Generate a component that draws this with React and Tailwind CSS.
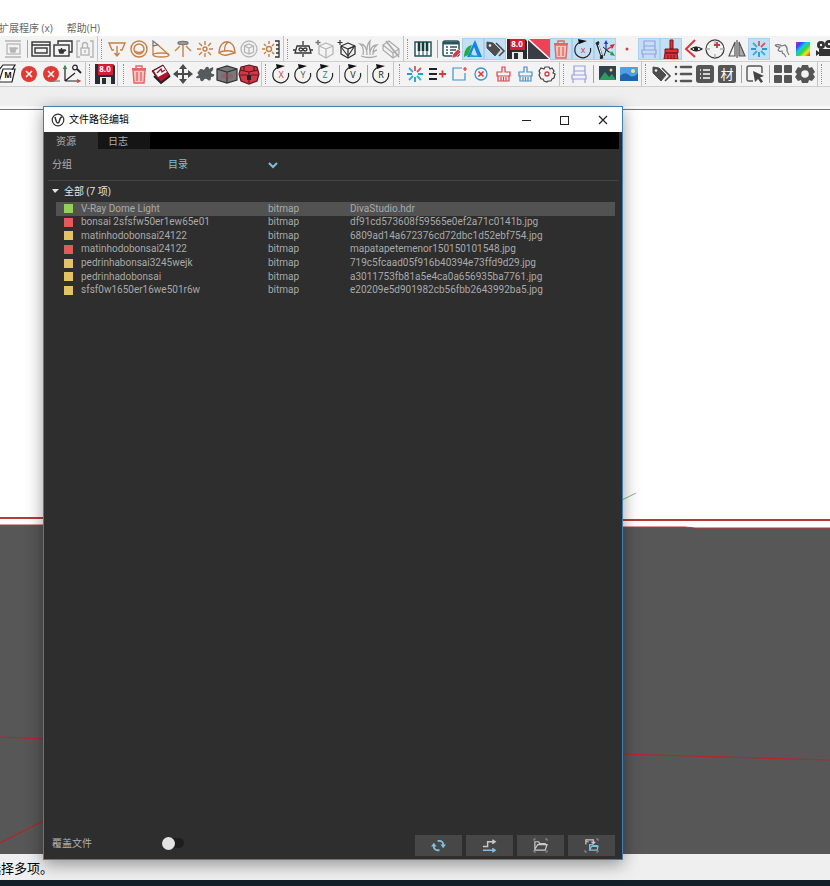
import React from "react";

const O = "#c58145";
const D = "#333333";
const G = "#b5b5b5";
const R = "#d9363c";
const B = "#3b93cf";

const cube = (c) => (
  <g stroke={c} fill="none" strokeWidth="1.3" strokeLinejoin="round">
    <path d="M12 5l7 3v8l-7 4-7-4V8z" />
    <path d="M5 8l7 3 7-3M12 11v9" />
  </g>
);

const floppy = (
  <>
    <path d="M1 1h18l2 2v18H1z" fill="#2a2c33" />
    <rect x="4" y="1" width="15" height="11" fill="#d31f35" />
    <rect x="6" y="14" width="11" height="7" fill="#e8e8e8" />
    <rect x="8" y="15" width="4" height="6" fill="#2a2c33" />
    <text x="11" y="9" textAnchor="middle" fontSize="8" fontWeight="700" fill="#fff">8.0</text>
  </>
);

const trash = (
  <g stroke="#e26664" strokeWidth="1.4" fill="#f8c4c0">
    <path d="M5 7l1 13h10l1-13z" />
    <path d="M4 6h14" strokeWidth="2" />
    <path d="M8 5V3h6v2" fill="none" />
    <path d="M9 9v9M13 9v9" />
  </g>
);

const tags = (
  <g fill="#4d4d4d">
    <path d="M3 4l6 1 7 7-5 6-8-8z" stroke="#4d4d4d" strokeLinejoin="round" />
    <circle cx="6" cy="7.500" r="1.300" fill="#f3f3f3" />
    <path d="M12 5l8 8-5 5" fill="none" stroke="#4d4d4d" strokeWidth="1.600" />
  </g>
);

const rotate = (letter, color) => (
  <>
    <path d="M18.500 10A8 8 0 1 1 9 4" fill="none" stroke="#222" strokeWidth="1.200" />
    <path d="M6 1l9 2-8 3z" fill="#111" />
    <text x="11" y="15" textAnchor="middle" fontSize="9" fill={color}>{letter}</text>
  </>
);

const chair = (
  <g fill="none" stroke="#9b9ee6" strokeWidth="1.200">
    <path d="M6 12V3h11v9M6 8h11M4 12h14v4H4zM5 16v4M17 16v4" />
  </g>
);

const spark = (
  <g strokeWidth="1.800" fill="none">
    <path d="M11 14v5M3 11h5M14 11h5" stroke="#1f9bd6" />
    <path d="M5 5l4 4M17 17l-4-4M5 17l4-4" stroke="#3aaedb" />
    <path d="M17 5l-4 4M11 3v5" stroke="#d55563" />
  </g>
);

const cross = (
  <>
    <circle cx="11" cy="11" r="8" fill="#e03b32" />
    <path d="M8 8l6 6M14 8l-6 6" stroke="#fff" strokeWidth="1.500" />
  </>
);

const broom = (c) => (
  <g fill="none" stroke={c} strokeWidth="1.200">
    <path d="M10 9V4h3v5h5v4H5V9zM6 13v5h11v-5M9 14v4M11.500 14v4M14 14v4" />
  </g>
);

const ICONS = {
  renderFrame: (
    <g fill="none" stroke={G} strokeWidth="1.300">
      <path d="M3 3h16M3 19h16" />
      <rect x="5" y="6" width="13" height="10" />
      <path d="M8 10h6l-1 4H9zM14 11l2-1" fill={G} />
    </g>
  ),
  frameBuffer: (
    <g fill="none" stroke={D} strokeWidth="1.400">
      <rect x="2" y="4" width="18" height="14" />
      <path d="M2 7h18" strokeWidth="1.500" />
      <rect x="5" y="10" width="12" height="5" />
    </g>
  ),
  batchFrame: (
    <g fill="none" stroke={D} strokeWidth="1.400">
      <path d="M6 6V3h14v11h-3" />
      <rect x="2" y="7" width="15" height="11" />
      <path d="M7 12h5l-1 3H8zM12 13l2-1M9.500 10v2" fill={D} />
    </g>
  ),
  lockFrame: (
    <g fill="none" stroke={G} strokeWidth="1.400">
      <path d="M6 3H3v16h3M16 3h3v16h-3" />
      <rect x="7" y="10" width="8" height="7" />
      <path d="M8.500 10V7a2.500 2.500 0 0 1 5 0v3M11 12v3" />
    </g>
  ),
  rectLight: (
    <g fill="none" stroke={O} strokeWidth="1.400">
      <path d="M8 12H6L3 5h16l-3 7h-2M11 8v10M8.500 15l2.500 3 2.500-3" />
    </g>
  ),
  sphereLight: (
    <g fill="none" stroke={O} strokeWidth="1.400">
      <circle cx="11" cy="11" r="8" />
      <circle cx="11" cy="11" r="5" />
      <path d="M7 13q4 3 8 0" />
    </g>
  ),
  spotLight: (
    <g fill="none" stroke={O} strokeWidth="1.300">
      <path d="M3 3v5l5-1z" stroke="#777" />
      <path d="M3 8v9M8 7l11 10" />
      <ellipse cx="11" cy="17" rx="8" ry="2" />
    </g>
  ),
  iesLight: (
    <g fill="none" stroke={O} strokeWidth="1.400">
      <ellipse cx="11" cy="5" rx="5" ry="1.500" stroke="#777" fill="#aaa" />
      <path d="M11 7v12M8 8l-5 5M14 8l5 5" />
    </g>
  ),
  omniLight: (
    <g fill="none" stroke={O} strokeWidth="1.400">
      <circle cx="11" cy="11" r="2" />
      <path d="M11 3v4M11 15v4M3 11h4M15 11h4M5 5l3 3M14 14l3 3M5 17l3-3M14 8l3-3" />
    </g>
  ),
  domeLight: (
    <g fill="none" stroke={O} strokeWidth="1.300">
      <path d="M3 15C3 0 19 0 19 15M12 4c-3 3-4 6-3 9" />
      <path d="M3 15q4 3 8 2t8-2q-4-3-10-2-4 0-6 2z" />
    </g>
  ),
  meshLight: (
    <g fill="none" stroke={G} strokeWidth="1.300">
      <circle cx="11" cy="11" r="8" />
      <path d="M11 6l4.500 2v6L11 16l-4.500-2V8zM6.500 8l4.500 2 4.500-2M11 10v6" />
    </g>
  ),
  sunLight: (
    <>
      <g fill="none" stroke={O} strokeWidth="1.400">
        <circle cx="9" cy="11" r="2.500" />
        <path d="M9 3v3M9 16v3M2 11h3M4 6l2 2M4 16l2-2M12 8l2-2M12 14l2 2" />
      </g>
      <path d="M15 3h4v16h-4M16 7h3M16 11h3M16 15h3" fill="none" stroke={D} strokeWidth="1.300" />
    </>
  ),
  infinitePlane: (
    <g fill="none" stroke={D} strokeWidth="1.300">
      <path d="M5 8h12l2 7H3zM11 3v4M11 16v3M1 12h3M18 12h3" />
      <path d="M11 11.500c-1-2-4-2-4 0s3 2 4 0 4-2 4 0-3 2-4 0" />
    </g>
  ),
  exportProxy: (
    <>
      {cube(G)}
      <path d="M4 2v5M1.500 4.500h5" stroke="#777" strokeWidth="1.500" />
    </>
  ),
  importProxy: (
    <>
      {cube(D)}
      <path d="M4 2v5M1.500 4.500h5M12 11l7-3M5 9l7 9M12 18l6-9" stroke={D} strokeWidth="1.200" fill="none" />
    </>
  ),
  fur: (
    <g fill="none" stroke="#aaaaaa" strokeWidth="1.300">
      <path d="M5 17C6 11 5 8 2 6c5 0 7 4 7 11M9 12c0-4 1-7 3-9-1 4 0 9 0 14M12 14c1-5 3-7 7-7-4 3-4 6-4 10M15 15q2-3 4-3M3 18q8 3 16 0" />
    </g>
  ),
  clipper: (
    <g fill="none" stroke="#aaaaaa" strokeWidth="1.200">
      <path d="M3 7l6-4 10 8v5l-6 4L3 12zM3 7l10 8 6-4M13 15v5" />
      <path d="M6 3l13 16" strokeWidth="1.800" />
    </g>
  ),
  piano: (
    <>
      <rect x="3" y="4" width="16" height="14" fill="#fff" stroke="#174a4c" strokeWidth="1.400" />
      <path d="M7 4v14M11 4v14M15 4v14" stroke="#174a4c" />
      <path d="M7 4v9M11 4v9M15 4v9" stroke="#123c40" strokeWidth="2.600" />
    </>
  ),
  listEdit: (
    <>
      <rect x="3" y="3" width="16" height="15" rx="2" fill="#fff" stroke="#29545c" strokeWidth="1.500" />
      <path d="M3 5h16" stroke="#29545c" strokeWidth="3" />
      <path d="M6 9h2M10 9h7M6 12h2M10 12h6M6 15h2M10 15h3" stroke="#29545c" strokeWidth="1.500" />
      <path d="M12 20l1-4 5-5 3 3-5 5z" fill="#d53b50" stroke="#f3f3f3" strokeWidth="0.600" />
    </>
  ),
  aLogo: (
    <>
      <path d="M2 19C2 12 5 8 10 7L6 17z" fill="#1fae3c" />
      <path d="M13 2l7 17h-4L12 9 8 19H5z" fill="#1284e8" />
      <path d="M9 16q4 3 8 0v3H8z" fill="#1a9fd8" />
    </>
  ),
  tags,
  floppy,
  diagonal: (
    <>
      <rect x="0" y="1" width="22" height="20" fill="#3a3d44" />
      <path d="M0 1h22v20z" fill="#ed4356" />
      <path d="M0 1l22 20" stroke="#fff" strokeWidth="1.500" />
    </>
  ),
  trash,
  rotateX: rotate("x", R),
  axes: (
    <>
      <path d="M3 5l5 14M2 6l3-2M6 20l3-1" stroke="#222" strokeWidth="2.400" />
      <path d="M4.500 7l3 10" stroke="#fff" />
      <path d="M12 12V5" stroke="#2438c9" strokeWidth="1.200" />
      <path d="M10 6l2-4 2 4z" fill="#2438c9" />
      <path d="M12 12l5-3" stroke="#d3252d" strokeWidth="1.200" />
      <path d="M16 7l5-1-3 5z" fill="#d3252d" />
      <path d="M12 12l5 3" stroke="#20a23c" strokeWidth="1.200" />
      <path d="M18 13l3 5-5-1z" fill="#20a23c" />
      <path d="M12 12l-2 6M9 9l6 5" stroke="#222" />
    </>
  ),
  dot: <circle cx="11" cy="11" r="1.500" fill="#cc4548" />,
  chair,
  brush: (
    <g fill="#d9343a" stroke="#7c1518">
      <path d="M10 2h3v9h-3zM5 11h13v4H5zM5 15h12l1 6H4z" />
      <path d="M8 17v4M11 17v4M14 17v4" />
    </g>
  ),
  eyeArrow: (
    <>
      <path d="M13 2L4 11l9 8" fill="none" stroke="#e0323a" strokeWidth="2" />
      <path d="M9 11q5-4 11 0-6 4-11 0z" fill="#fff" stroke="#222" strokeWidth="1.200" />
      <circle cx="14" cy="11" r="2.200" fill="#222" />
    </>
  ),
  compass: (
    <g fill="none" stroke="#444" strokeWidth="1.300">
      <circle cx="11" cy="11" r="9" />
      <path d="M11 2v4M11 16v4M2 11h4M16 11h4" stroke="#aaa" />
      <path d="M13 4v6M10 7h6" stroke="#c93843" strokeWidth="1.800" />
    </g>
  ),
  mirror: (
    <g fill="none" stroke="#555" strokeWidth="1.200">
      <path d="M11 2v18M9 4v14H3z" />
      <path d="M13 4v14h6z" fill="#aaa" />
    </g>
  ),
  spark,
  hand: (
    <path d="M5 7q4-1 7 1l3-1q3 3 2 6l2 4M5 7q1 2 5 2l-2 3q1 2 4 1 0 3 2 3l2 3" fill="none" stroke="#777" strokeWidth="1.100" />
  ),
  rainbow: (
    <>
      <defs>
        <linearGradient id="spectrum" x1="0" y1="0" x2="1" y2="1">
          <stop offset="0" stopColor="#e522d6" />
          <stop offset="0.200" stopColor="#3f3df0" />
          <stop offset="0.400" stopColor="#11c9e8" />
          <stop offset="0.580" stopColor="#35d832" />
          <stop offset="0.760" stopColor="#f4e51c" />
          <stop offset="1" stopColor="#ee2a1a" />
        </linearGradient>
      </defs>
      <rect x="4" y="4" width="14" height="14" fill="url(#spectrum)" />
    </>
  ),
  film: (
    <g fill="#333">
      <circle cx="7" cy="7" r="4" />
      <circle cx="15" cy="6" r="4" />
      <path d="M5 11h13v7H5zM2 12l4 3-4 3z" />
      <circle cx="7" cy="7" r="1.200" fill="#eee" />
      <circle cx="15" cy="6" r="1.200" fill="#eee" />
    </g>
  ),
  mFolder: (
    <>
      <path d="M3 7l4-5h12l-3 5M3 7L0 18M7 6h12l-3 13H3z" fill="#fff" stroke="#222" strokeWidth="1.200" />
      <text x="12" y="15" textAnchor="middle" fontSize="8" fontWeight="700" fill="#111">M</text>
    </>
  ),
  cross,
  crossLine: (
    <>
      {cross}
      <path d="M9 18h11" stroke="#83706b" strokeWidth="1.200" />
    </>
  ),
  axisPin: (
    <g fill="none" stroke="#222" strokeWidth="1.200">
      <path d="M3 18V5M3 18h14M3 18l10-8" />
      <path d="M1.500 6L3 3l1.500 3" stroke="#287d41" />
      <path d="M15 16.500l3 1.500-3 1.500" stroke={R} />
      <circle cx="13" cy="4.500" r="2.300" />
      <path d="M15 6l4 4" strokeWidth="1.800" />
    </g>
  ),
  eraser: (
    <>
      <path d="M2 8l11-6 7 11-9 7z" fill="#b11629" stroke="#50101a" />
      <path d="M4 8l9-5 4 6-9 5z" fill="#fff" />
      <path d="M7 10l4-4 1 3 3-2" fill="none" stroke="#b11629" strokeWidth="1.400" />
      <path d="M4 13l7 7 9-7" fill="none" stroke="#222" strokeWidth="2" />
    </>
  ),
  move: (
    <g fill="#4b4b4b" stroke="none">
      <path d="M10 5h2v12h-2zM5 10h12v2H5z" />
      <path d="M7 6l4-5 4 5zM7 16l4 5 4-5zM6 7l-5 4 5 4zM16 7l5 4-5 4z" />
    </g>
  ),
  splat: (
    <path d="M6 6q3 0 4 1l2-3q3-1 3 2l4-2q1 3-2 5 0 2 3 2 1 3-3 3 0 5-3 3-3-3-5 1-3 1-3-3-4 1-4-1l3-2q-3-3 0-4z" fill="#555b5d" />
  ),
  boxGray: (
    <>
      <path d="M1 6l10-3 10 3v11l-10 3-10-3z" fill="#77797c" stroke="#333" strokeWidth="1.200" />
      <path d="M1 6l10 3 10-3M11 9v11" fill="none" stroke="#333" strokeWidth="1.200" />
      <ellipse cx="11" cy="13" rx="6" ry="3" fill="#b8394c" opacity="0.350" />
    </>
  ),
  boxRed: (
    <>
      <path d="M3 4l8-2 8 2 2 7-2 7-8 3-8-3-2-7z" fill="#d23848" stroke="#5b1820" strokeWidth="1.200" />
      <path d="M2 7l9 2 9-2M11 9v11M6 3v5M16 3v5M2 12h7M13 12h7" fill="none" stroke="#5b1820" strokeWidth="1.200" />
      <path d="M9 12h4v5H9z" fill="#222" />
    </>
  ),
  rotX: rotate("X", R),
  rotY: rotate("Y", "#555555"),
  rotZ: rotate("Z", "#288979"),
  rotV: rotate("V", "#222222"),
  rotR: rotate("R", "#222222"),
  listPlus: (
    <>
      <path d="M3 6h8M3 11h8M3 16h8" stroke="#222" strokeWidth="2" />
      <path d="M13 11h7M16.500 7.500v7" stroke={R} strokeWidth="1.800" />
    </>
  ),
  pageNew: (
    <>
      <path d="M14 5H5v12h12v-7" fill="none" stroke={B} strokeWidth="1.200" />
      <path d="M17 4v4M15 6h4" stroke={R} strokeWidth="1.200" />
    </>
  ),
  circleX: (
    <>
      <circle cx="11" cy="11" r="6" fill="none" stroke={B} strokeWidth="1.300" />
      <path d="M8.500 8.500l5 5M13.500 8.500l-5 5" stroke={R} strokeWidth="1.500" />
    </>
  ),
  broomRed: broom("#d9464f"),
  broomBlue: broom("#4b8fc2"),
  gearThin: (
    <>
      <path d="M9 4h4l1 2 2-1 2 3-1 2 2 1-1 4-2 1-1 2h-3l-1 1-3-1-1-2-2 0-2-4 1-2-1-2 2-3 3 1z" fill="none" stroke="#444" strokeWidth="1.200" />
      <circle cx="11" cy="11" r="2" fill="none" stroke={R} strokeWidth="1.300" />
    </>
  ),
  imageDark: (
    <>
      <rect x="3" y="3" width="17" height="14" fill="#2f4250" />
      <path d="M3 17l6-8 4 5 3-3 4 6z" fill="#2b9b61" />
      <circle cx="15" cy="7" r="1.500" fill="#f0d36a" />
    </>
  ),
  imageBlue: (
    <>
      <rect x="2" y="4" width="18" height="14" rx="1" fill="#4ca0e8" />
      <path d="M2 13q5-5 9-1t9-2v8H2z" fill="#1e65ad" />
      <circle cx="15" cy="8" r="2" fill="#f6e47b" />
    </>
  ),
  bullets: (
    <g stroke="#555" strokeWidth="2.600" strokeLinecap="round">
      <path d="M4 4h0M4 11h0M4 18h0M9 4h10M9 11h10M9 18h10" />
    </g>
  ),
  listBox: (
    <>
      <rect x="2" y="2" width="18" height="18" rx="3" fill="#555" />
      <path d="M6 7h1M6 11h1M6 15h1M9 7h7M9 11h7M9 15h7" stroke="#fff" strokeWidth="1.600" />
    </>
  ),
  material: (
    <>
      <rect x="2" y="2" width="18" height="18" rx="2" fill="#555" />
      <text x="11" y="16" textAnchor="middle" fontSize="13" fill="#fff">材</text>
    </>
  ),
  pointer: (
    <>
      <path d="M9 18H5q-2 0-2-2V5q0-2 2-2h11q2 0 2 2v5" fill="none" stroke="#555" strokeWidth="1.400" />
      <path d="M9 8l11 5-4 1.500 3 4-2 1.500-3-4-3 3z" fill="#444" />
    </>
  ),
  grid4: (
    <g fill="#555">
      <rect x="2" y="2" width="8" height="8" rx="1" />
      <rect x="12" y="2" width="8" height="8" rx="1" />
      <rect x="2" y="12" width="8" height="8" rx="1" />
      <rect x="12" y="12" width="8" height="8" rx="1" />
    </g>
  ),
  gear: (
    <>
      <path d="M8 2h6l1 3 3-1 3 5-2 2 2 3-3 4-3-1-1 3H8l-1-3-3 1-3-4 2-3-2-2 3-5 3 1z" fill="#555" />
      <circle cx="11" cy="11" r="3.800" fill="#f3f3f3" />
    </>
  ),
};

const TOP_ROW = [
  "renderFrame", "|", "frameBuffer", "batchFrame", "lockFrame", "#",
  "rectLight", "sphereLight", "spotLight", "iesLight", "omniLight", "domeLight", "meshLight", "sunLight", "#",
  "infinitePlane", "exportProxy", "importProxy", "fur", "clipper", "#",
  "piano", "|", "listEdit", "*aLogo", "*tags", "floppy", "diagonal", "*trash", "*rotateX", "*axes", "dot",
  "*chair", "*brush", "eyeArrow", "compass", "mirror", "*spark", "hand", "rainbow", "film",
];

const BOTTOM_ROW = [
  "mFolder", "cross", "crossLine", "axisPin", "#", "floppy", "##",
  "trash", "eraser", "move", "splat", "boxGray", "boxRed", "#",
  "rotX", "rotY", "rotZ", "|", "rotV", "|", "rotR", "##",
  "spark", "listPlus", "pageNew", "circleX", "broomRed", "broomBlue", "gearThin", "#",
  "chair", "|", "imageDark", "imageBlue", "#",
  "tags", "bullets", "listBox", "material", "|", "pointer", "|", "grid4", "gear", "#",
];

function ToolItem({ item }) {
  if (item === "|") {
    return (
      <span className="flex h-full w-1.5 shrink-0 items-center justify-center">
        <span className="h-[18px] w-px bg-[#a5a5a5]" />
      </span>
    );
  }
  if (item[0] === "#") {
    return (
      <span className={"flex h-full shrink-0 items-center justify-between pl-px pr-1 " + (item === "##" ? "w-3" : "w-2.5")}>
        <span className="h-full w-px bg-[#c4c4c4]" />
        <span className="h-[20px] border-l border-dotted border-[#909090]" />
      </span>
    );
  }
  const active = item[0] === "*";
  const name = active ? item.slice(1) : item;
  return (
    <button
      type="button"
      aria-label={name}
      className={
        "flex h-[22px] w-[22px] shrink-0 items-center justify-center " +
        (active ? "bg-[#c3dff3] outline outline-1 -outline-offset-1 outline-[#a9d1ee]" : "")
      }
    >
      <svg viewBox="0 0 22 22" className="size-[22px]" aria-hidden="true">{ICONS[name]}</svg>
    </button>
  );
}

function Toolbar({ items, className }) {
  return (
    <div role="toolbar" className={"flex items-center overflow-hidden border-b border-[#cfcfcf] bg-[#f3f3f3] " + className}>
      {items.map((item, i) => (
        <ToolItem key={i} item={item} />
      ))}
    </div>
  );
}

function Viewport() {
  return (
    <svg viewBox="0 0 830 744" preserveAspectRatio="none" className="absolute inset-0 size-full" aria-hidden="true">
      <rect width="830" height="744" fill="#ffffff" />
      <path d="M0 415H43L620 417H685L695 418H830V744H0z" fill="#575757" />
      <g fill="none" stroke="#b8393c">
        <path d="M0 408h43M620 410h210" strokeWidth="2" />
        <path d="M0 415h43M620 417h65l10 1h135" strokeWidth="1.200" />
      </g>
      <path d="M0 627l43 2M620 644l210 6M0 733l43-22" fill="none" stroke="#b3262b" strokeWidth="1.200" />
      <path d="M620 391l16-8" stroke="#7dbd7d" fill="none" />
    </svg>
  );
}

const ASSETS = [
  ["green", "V-Ray Dome Light", "DivaStudio.hdr"],
  ["red", "bonsai 2sfsfw50er1ew65e01", "df91cd573608f59565e0ef2a71c0141b.jpg"],
  ["yellow", "matinhodobonsai24122", "6809ad14a672376cd72dbc1d52ebf754.jpg"],
  ["red", "matinhodobonsai24122", "mapatapetemenor150150101548.jpg"],
  ["yellow", "pedrinhabonsai3245wejk", "719c5fcaad05f916b40394e73ffd9d29.jpg"],
  ["yellow", "pedrinhadobonsai", "a3011753fb81a5e4ca0a656935ba7761.jpg"],
  ["yellow", "sfsf0w1650er16we501r6w", "e20209e5d901982cb56fbb2643992ba5.jpg"],
];

const SWATCH = { green: "bg-[#92cf5c]", red: "bg-[#e25a5a]", yellow: "bg-[#e2c465]" };

function AssetTable() {
  return (
    <table className="ml-2 h-[95px] w-[559px] table-fixed border-collapse font-[Roboto,sans-serif] text-[10px] leading-3 text-[#a9a9a9]">
      <colgroup>
        <col className="w-[25px]" />
        <col className="w-[187px]" />
        <col className="w-[82px]" />
        <col />
      </colgroup>
      <tbody>
        {ASSETS.map(([color, name, file], i) => (
          <tr key={i} className={i === 0 ? "bg-[#525252]" : ""}>
            <td className="p-0 pl-2 align-middle">
              <span className={"block size-[9px] " + SWATCH[color]} />
            </td>
            <td className="p-0 align-middle">{name}</td>
            <td className="p-0 align-middle">bitmap</td>
            <td className="p-0 align-middle">{file}</td>
          </tr>
        ))}
      </tbody>
    </table>
  );
}

const FOOTER_ACTIONS = [
  ["Refresh", (
    <g fill="none" stroke="#7fc0df" strokeWidth="2">
      <path d="M7 3h2a4 4 0 0 1 4 4v1M9 13H7a4 4 0 0 1-4-4V8" />
      <path d="M10 7h6l-3 4zM0 9h6L3 5z" fill="#7fc0df" stroke="none" />
    </g>
  )],
  ["Redirect", (
    <g fill="none" strokeWidth="1.500">
      <path d="M1 9h5V4h7M11 2l3 2-3 2" stroke="#c9c9c9" />
      <path d="M1 13h12M11 11l3 2-3 2" stroke="#7fc0df" />
    </g>
  )],
  ["Open folder", (
    <g fill="none" stroke="#c9c9c9" strokeWidth="1.300">
      <path d="M2 12V4h4l1 2h6v2M2 12l3-5h10l-2 6H2z" />
      <path d="M1 3V1h2M13 1h2v2M1 13v2h2M13 15h2v-2" stroke="#8d9ba2" strokeWidth="1" />
    </g>
  )],
  ["Relocate files", (
    <g fill="none" strokeWidth="1.300">
      <path d="M2 7V2h8v4M8 4l2 2 2-2M2 4h3" stroke="#c9c9c9" />
      <path d="M6 13V7h3l1 1h4v2M6 13l2-4h7l-1 4z" stroke="#7fc0df" />
      <path d="M13 1h2v2M1 13v2h2M13 15h2v-2" stroke="#8d9ba2" strokeWidth="1" />
    </g>
  )],
];

function FilePathEditor() {
  return (
    <section
      aria-label="文件路径编辑"
      className="absolute left-[43px] top-[106px] flex h-[754px] w-[580px] flex-col border border-[#3c82b8] bg-[#2e2e2e] shadow-[0_4px_16px_rgba(0,0,0,0.4)]"
    >
      <header className="flex h-[25px] shrink-0 items-center bg-white pl-[7px] text-black">
        <svg viewBox="0 0 14 14" className="size-[14px]" aria-hidden="true">
          <circle cx="7" cy="7" r="5.800" fill="none" stroke="#333" strokeWidth="1.200" />
          <path d="M4 4c1 3 1 6 3 6s1-6 4-6" fill="none" stroke="#333" strokeWidth="1.500" />
        </svg>
        <h1 className="ml-1 flex-1 text-[10px] font-normal">文件路径编辑</h1>
        <button type="button" aria-label="Minimize" className="flex h-full w-[39px] items-center justify-center">
          <svg viewBox="0 0 10 10" className="size-[10px]"><path d="M1 5.500h9" stroke="#222" /></svg>
        </button>
        <button type="button" aria-label="Maximize" className="flex h-full w-[38px] items-center justify-center">
          <svg viewBox="0 0 10 10" className="size-[10px]"><rect x="1.500" y="1.500" width="8" height="8" fill="none" stroke="#222" /></svg>
        </button>
        <button type="button" aria-label="Close" className="flex h-full w-[39px] items-center justify-center">
          <svg viewBox="0 0 10 10" className="size-[10px]"><path d="M1 1l8 8M9 1L1 9" stroke="#222" strokeWidth="1.200" /></svg>
        </button>
      </header>

      <div className="flex min-h-0 flex-1 flex-col pl-1 pr-[3px] text-[10px] text-[#b0b0b0]">
        <div role="tablist" className="flex h-[17px] shrink-0 bg-black leading-[18px]">
          <button type="button" role="tab" aria-selected="true" className="w-[50px] bg-[#2e2e2e] pl-2 text-left">资源</button>
          <button type="button" role="tab" aria-selected="false" className="w-[52px] bg-[#151515] pl-[10px] text-left">日志</button>
        </div>

        <div className="flex h-8 shrink-0 items-center border-b border-[#444444] pl-1">
          <label htmlFor="group-by" className="w-[116px]">分组</label>
          <span className="relative flex w-[110px] items-center">
            <select id="group-by" className="w-full appearance-none bg-transparent p-0 text-[#7dbfdc]">
              <option>目录</option>
            </select>
            <svg viewBox="0 0 10 8" className="pointer-events-none absolute right-0 h-2 w-[10px]" aria-hidden="true">
              <path d="M1 2l4 4 4-4" fill="none" stroke="#7dbfdc" strokeWidth="2" />
            </svg>
          </span>
        </div>

        <button type="button" className="flex h-[21px] shrink-0 items-center gap-[5px] pl-[3px] text-[#e4e4e4]">
          <svg viewBox="0 0 8 5" className="h-[5px] w-2" aria-hidden="true"><path d="M1 0h7L4 4z" fill="#e4e4e4" /></svg>
          全部 (7 项)
        </button>
        <AssetTable />

        <footer className="mt-auto flex h-6 shrink-0 items-start pl-1 pr-1">
          <label htmlFor="override" className="w-[110px] leading-[17px]">覆盖文件</label>
          <span className="relative flex h-4 w-[22px] items-center">
            <input id="override" type="checkbox" className="peer h-[10px] w-[22px] appearance-none rounded-full bg-[#1e1e1e]" />
            <span className="pointer-events-none absolute left-0 size-[13px] rounded-full bg-[#e3e3e3] peer-checked:left-[9px]" />
          </span>
          <span className="ml-auto flex gap-1">
            {FOOTER_ACTIONS.map(([label, art]) => (
              <button key={label} type="button" aria-label={label} className="flex h-[21px] w-[47px] items-center justify-center bg-[#474747]">
                <svg viewBox="0 0 16 16" className="size-[15px]" aria-hidden="true">{art}</svg>
              </button>
            ))}
          </span>
        </footer>
      </div>
    </section>
  );
}

export default function App() {
  return (
    <div className="relative flex min-h-screen flex-col overflow-hidden bg-white font-['Open_Sans','Noto_Sans_CJK_SC',sans-serif]">
      <nav className="-ml-px flex h-9 items-end gap-3.5 text-[10px] leading-4 text-[#666666]">
        <a href="#extensions" className="whitespace-nowrap">扩展程序 (x)</a>
        <a href="#help" className="whitespace-nowrap">帮助(H)</a>
      </nav>
      <Toolbar items={TOP_ROW} className="h-[26px] pl-0.5" />
      <Toolbar items={BOTTOM_ROW} className="-ml-1 h-[25px]" />
      <div className="h-[19px] bg-[#efefef]" />
      <div className="h-[3px] bg-[#f8f8f8]" />
      <main className="relative flex-1 border-t border-[#757575]">
        <Viewport />
      </main>
      <footer className="h-[26px] bg-[#efefef]">
        <p className="-ml-3 text-[13px] leading-[28px] text-black">选择多项。</p>
      </footer>
      <div className="h-1.5 bg-[#13202a]" />
      <FilePathEditor />
    </div>
  );
}
